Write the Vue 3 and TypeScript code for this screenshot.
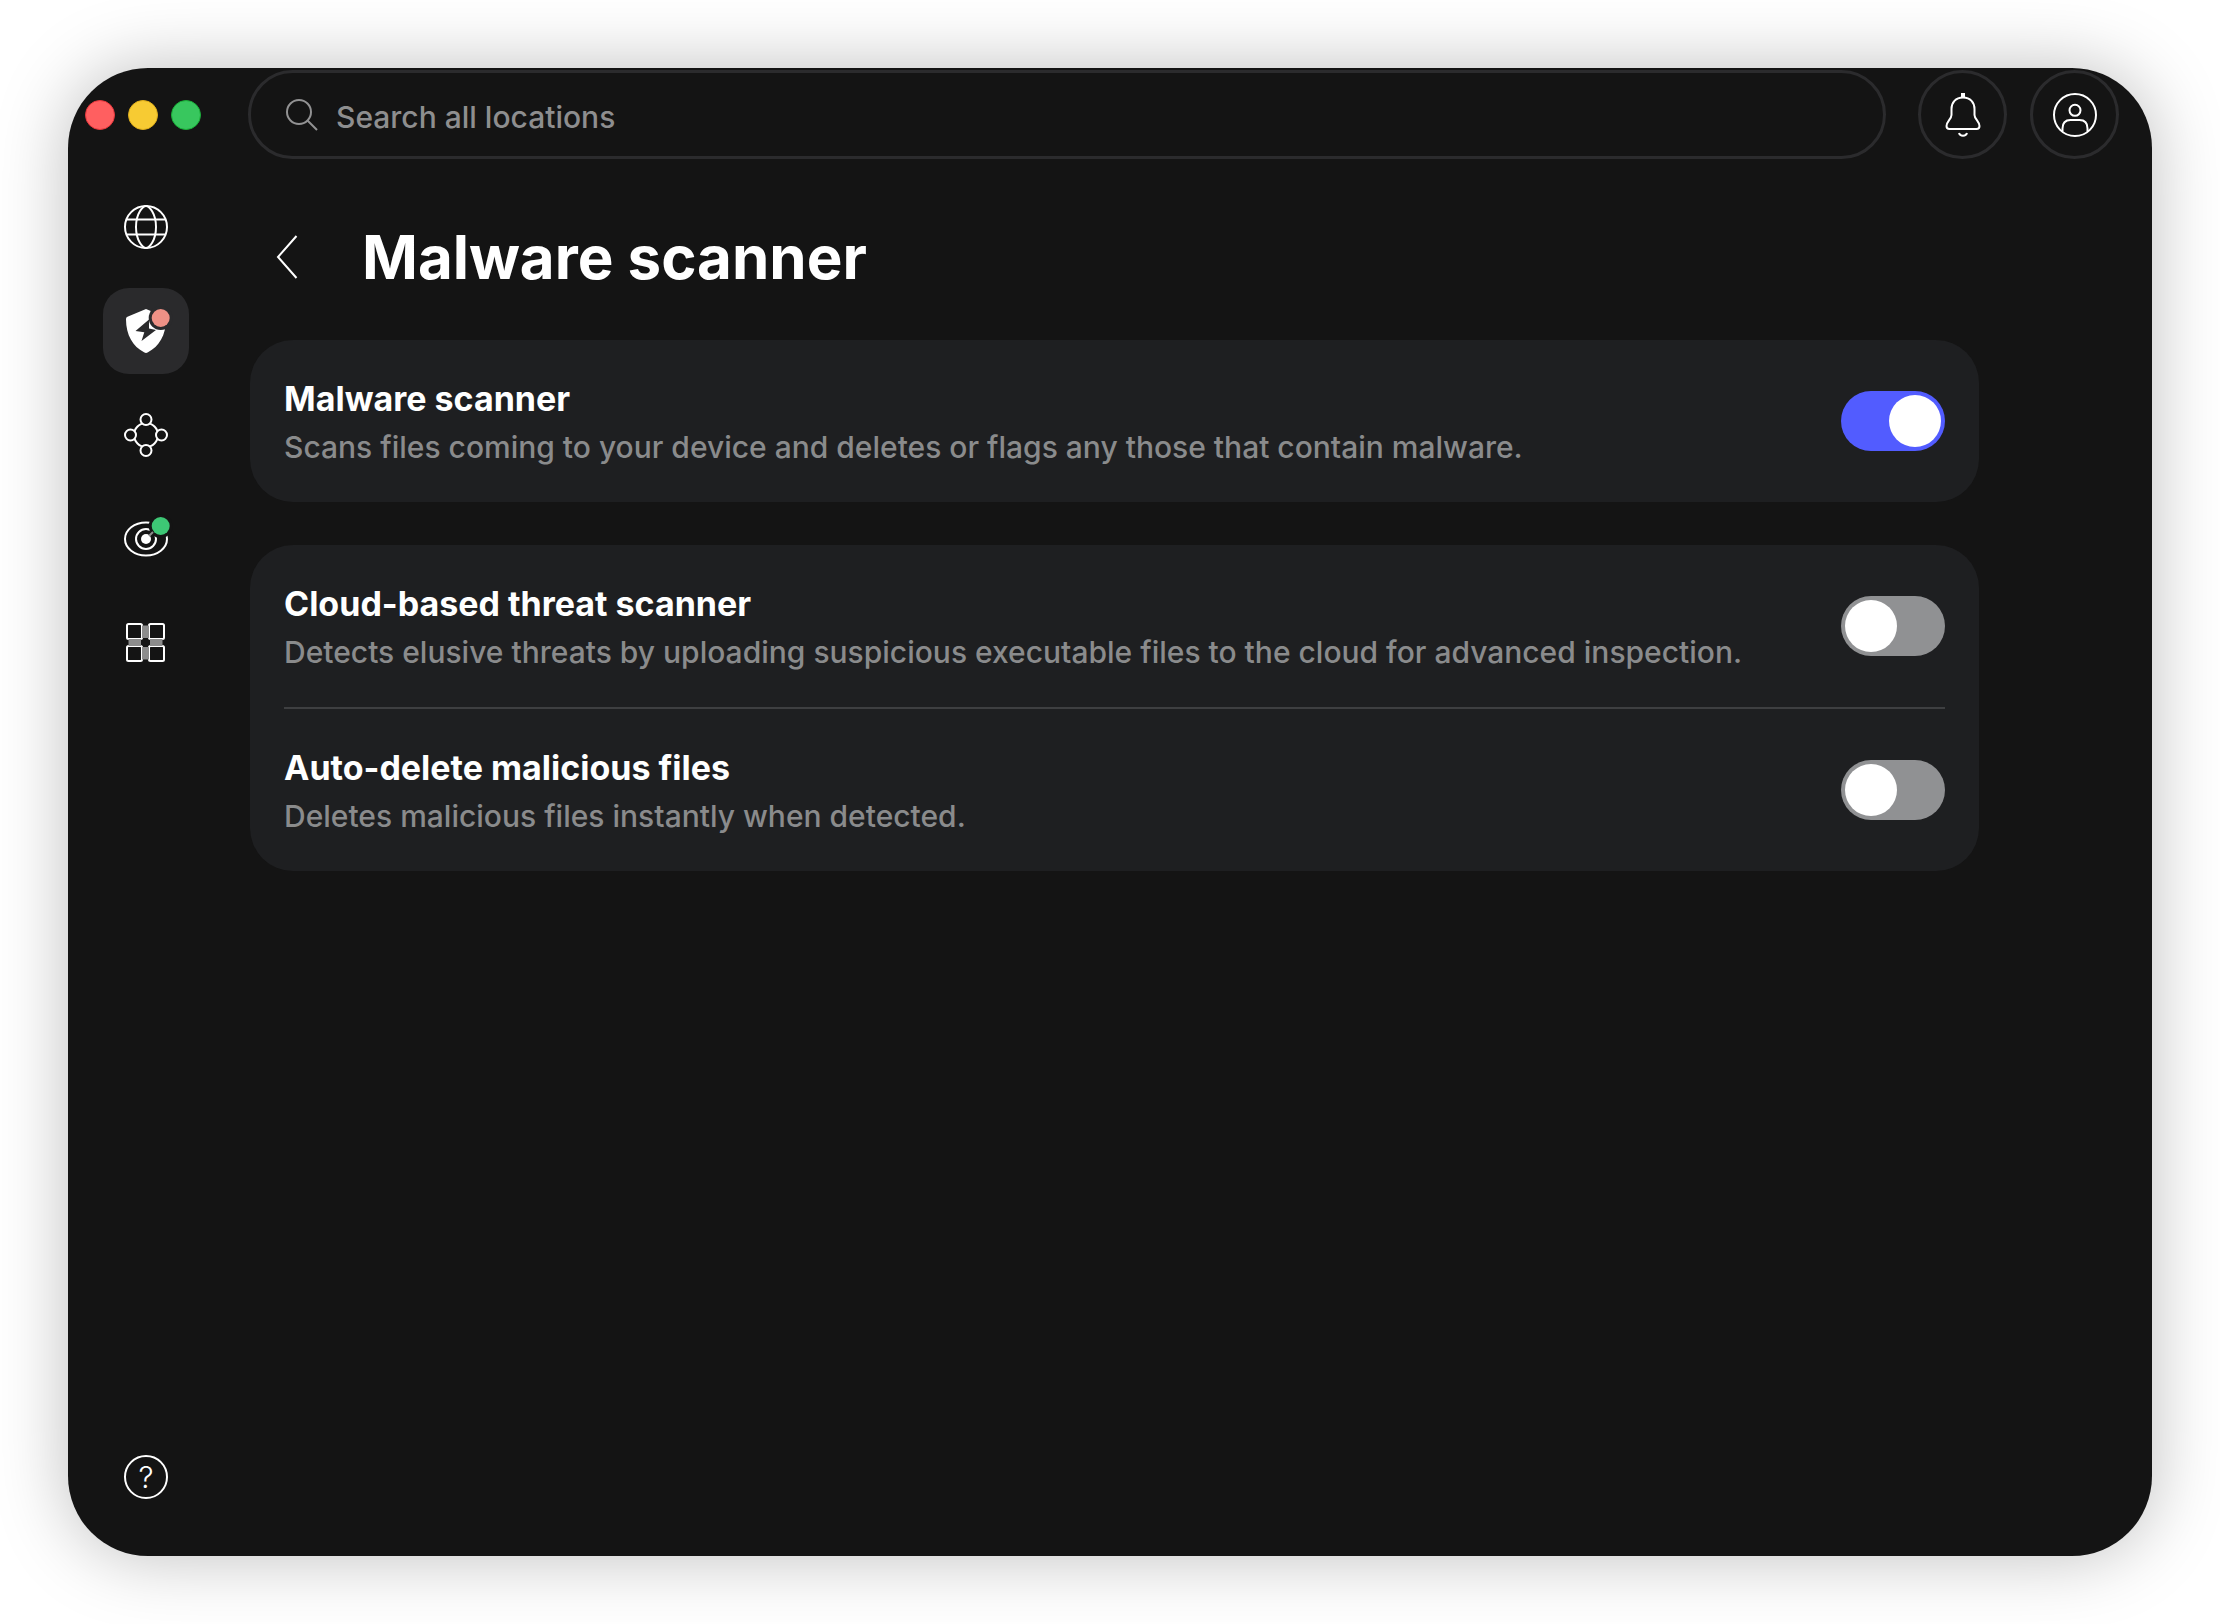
<script setup lang="ts">
import { ref } from 'vue'

interface Setting {
  id: string
  title: string
  description: string
  enabled: boolean
}

interface NavItem {
  id: string
  label: string
}

const query = ref('')
const activeNav = ref('threats')

const navItems: NavItem[] = [
  { id: 'vpn', label: 'VPN' },
  { id: 'threats', label: 'Threat protection' },
  { id: 'mesh', label: 'Device network' },
  { id: 'monitor', label: 'Dark web monitor' },
  { id: 'apps', label: 'More products' },
]

const groups = ref<Setting[][]>([
  [
    {
      id: 'malware-scanner',
      title: 'Malware scanner',
      description: 'Scans files coming to your device and deletes or flags any those that contain malware.',
      enabled: true,
    },
  ],
  [
    {
      id: 'cloud-scanner',
      title: 'Cloud-based threat scanner',
      description: 'Detects elusive threats by uploading suspicious executable files to the cloud for advanced inspection.',
      enabled: false,
    },
    {
      id: 'auto-delete',
      title: 'Auto-delete malicious files',
      description: 'Deletes malicious files instantly when detected.',
      enabled: false,
    },
  ],
])
</script>

<template>
  <div class="desktop">
    <div class="window">
      <header class="topbar">
        <div class="lights">
          <button class="light red" type="button" aria-label="Close"></button>
          <button class="light yellow" type="button" aria-label="Minimize"></button>
          <button class="light green" type="button" aria-label="Zoom"></button>
        </div>
        <label class="search">
          <svg class="search-icon" viewBox="0 0 32 32" aria-hidden="true">
            <circle cx="13" cy="13" r="12" />
            <path d="M21.5 21.5 31 31" />
          </svg>
          <input v-model="query" type="text" placeholder="Search all locations" aria-label="Search all locations" />
        </label>
        <div class="actions">
          <button class="round" type="button" aria-label="Notifications">
            <svg class="icon" viewBox="0 0 44 44" aria-hidden="true">
              <path d="M22 0v5" stroke-width="4" />
              <path d="M22 4.500C14.500 4.500 10.500 9.500 10.500 16v6c0 4-5 6.500-5 11 0 2 1 3 3 3h27c2 0 3-1 3-3 0-4.500-5-7-5-11v-6C33.500 9.500 29.500 4.500 22 4.500Z" />
              <path d="M18 40c1 3.500 7 3.500 8 0" />
            </svg>
          </button>
          <button class="round" type="button" aria-label="Account">
            <svg class="icon" viewBox="0 0 44 44" aria-hidden="true">
              <circle cx="22" cy="22" r="21" />
              <circle cx="22" cy="17.300" r="5.500" />
              <path d="M9.500 38.500v-3c0-5.500 3-8.500 8-8.500h9c5 0 8 3 8 8.500v3" />
            </svg>
          </button>
        </div>
      </header>

      <div class="body">
        <nav class="sidebar" aria-label="Products">
          <button
            v-for="item in navItems"
            :key="item.id"
            class="nav-item"
            :class="{ active: item.id === activeNav }"
            type="button"
            :aria-label="item.label"
            @click="activeNav = item.id"
          >
            <svg v-if="item.id === 'vpn'" class="icon" viewBox="0 0 44 44" aria-hidden="true">
              <circle cx="22" cy="22" r="21" />
              <path d="M2.500 14.600h39M2.500 29.400h39" />
              <path d="M22 1c-3 0-10 7-10 21s7 21 10 21 10-7 10-21S25 1 22 1Z" />
            </svg>
            <svg v-else-if="item.id === 'threats'" class="icon" viewBox="0 0 44 44" aria-hidden="true">
              <path class="solid" d="M22 0 4 7.500c-1.500.6-2 1.300-2 3C2 26 9 37.500 20 43.300c1.500.8 2.500.8 4 0C35 37.500 42 26 42 10.500c0-1.700-.5-2.400-2-3Z" />
              <path class="tile-cut" d="M25 10.500 11.500 22l8.800 1.200L17.500 32 32 21l-7-1.500Z" />
              <circle class="tile-cut" cx="36.700" cy="9" r="12" />
              <circle class="dot-red" cx="36.700" cy="9" r="9" />
            </svg>
            <svg v-else-if="item.id === 'mesh'" class="icon" viewBox="0 0 44 44" aria-hidden="true">
              <circle cx="22" cy="22" r="12" />
              <circle class="node" cx="22" cy="6.500" r="5.500" />
              <circle class="node" cx="6.500" cy="22" r="5.500" />
              <circle class="node" cx="37.500" cy="22" r="5.500" />
              <circle class="node" cx="22" cy="37.500" r="5.500" />
            </svg>
            <svg v-else-if="item.id === 'monitor'" class="icon" viewBox="0 0 44 44" aria-hidden="true">
              <ellipse cx="22" cy="22" rx="21" ry="16.500" />
              <circle cx="22" cy="22" r="10" />
              <circle class="window-cut" cx="36.700" cy="9" r="12" />
              <circle class="solid" cx="22" cy="22" r="5" />
              <path class="muted" d="m25 19 4-4" />
              <circle class="dot-green" cx="36.700" cy="9" r="9" />
            </svg>
            <svg v-else class="icon" viewBox="0 0 44 44" aria-hidden="true">
              <rect x="3" y="3" width="15" height="15" rx="1.500" />
              <rect x="25" y="3" width="15" height="15" rx="1.500" />
              <rect x="3" y="25" width="15" height="15" rx="1.500" />
              <rect x="25" y="25" width="15" height="15" rx="1.500" />
              <path class="muted-fill" d="M18 4.500h7v12.500h-7zM18 26h7v12.500h-7zM4.500 18h12.500v7h-12.500zM26 18h12.500v7h-12.500z" />
            </svg>
          </button>
          <button class="nav-item help" type="button" aria-label="Help">
            <span class="help-mark">?</span>
          </button>
        </nav>

        <main class="content">
          <div class="heading">
            <button class="back" type="button" aria-label="Back">
              <svg viewBox="0 0 22 44" aria-hidden="true">
                <path d="M20.500 1 2 22l18.500 21" />
              </svg>
            </button>
            <h1>Malware scanner</h1>
          </div>

          <section v-for="(group, index) in groups" :key="index" class="card">
            <div v-for="setting in group" :key="setting.id" class="row">
              <div class="text">
                <label class="title" :for="setting.id">{{ setting.title }}</label>
                <p :id="setting.id + '-note'" class="note">{{ setting.description }}</p>
              </div>
              <input
                :id="setting.id"
                v-model="setting.enabled"
                class="switch"
                type="checkbox"
                role="switch"
                :aria-describedby="setting.id + '-note'"
              />
            </div>
          </section>
        </main>
      </div>
    </div>
  </div>
</template>

<style>
body {
  background: #fff;
}
</style>

<style scoped>
.desktop,
.desktop * {
  box-sizing: border-box;
}

.desktop {
  display: flex;
  min-height: 100vh;
  padding: 68px;
  font-family: Inter, 'Liberation Sans', sans-serif;
  color: #fff;
}

button {
  padding: 0;
  border: 0;
  background: none;
  color: inherit;
  font: inherit;
}

.window {
  display: flex;
  flex: 1;
  flex-direction: column;
  min-width: 0;
  overflow: hidden;
  border-radius: 80px;
  background: #141414;
  box-shadow: 0 0 72px rgba(0, 0, 0, 0.26);
}

.topbar {
  display: flex;
  align-items: center;
  padding: 2px 33px 0 0;
}

.lights {
  display: flex;
  flex: none;
  gap: 13px;
  width: 180px;
  padding-left: 17px;
}

.light {
  width: 30px;
  height: 30px;
  border-radius: 50%;
}

.red {
  background: #ff5f60;
  border: 1px solid #e8383d;
}

.yellow {
  background: #f7cb33;
  border: 1px solid #dfae1c;
}

.green {
  background: #38c75e;
  border: 1px solid #1aae38;
}

.search {
  display: flex;
  flex: 1;
  align-items: center;
  gap: 18px;
  min-width: 0;
  height: 89px;
  margin-right: 32px;
  padding: 0 35px;
  border: 3px solid #2b2b2d;
  border-radius: 45px;
}

.search-icon {
  flex: none;
  width: 32px;
  height: 32px;
  fill: none;
  stroke: #929293;
  stroke-width: 2;
}

.search input {
  flex: 1;
  min-width: 0;
  height: 48px;
  padding: 4px 0 0;
  border: 0;
  outline: 0;
  background: none;
  color: #fff;
  font: 500 30px/44px Inter, 'Liberation Sans', sans-serif;
}

.search input::placeholder {
  color: #8e8e8f;
  opacity: 1;
}

.actions {
  display: flex;
  flex: none;
  gap: 23px;
}

.round {
  display: grid;
  place-items: center;
  width: 89px;
  height: 89px;
  border: 3px solid #2b2b2d;
  border-radius: 50%;
}

.icon {
  display: block;
  width: 44px;
  height: 44px;
  overflow: visible;
  fill: none;
  stroke: #fff;
  stroke-width: 2;
}

.solid {
  fill: #fff;
  stroke: none;
}

.tile-cut {
  fill: #2a2a2c;
  stroke: none;
}

.window-cut {
  fill: #141414;
  stroke: none;
}

.node {
  fill: #141414;
}

.muted {
  stroke: #8c8c8c;
}

.muted-fill {
  fill: #8c8c8c;
  stroke: none;
}

.dot-red {
  fill: #ef9186;
  stroke: none;
}

.dot-green {
  fill: #3dc775;
  stroke: none;
}

.body {
  display: flex;
  flex: 1;
}

.sidebar {
  display: flex;
  flex: none;
  flex-direction: column;
  align-items: center;
  gap: 18px;
  width: 156px;
  padding: 25px 0 36px;
}

.nav-item {
  display: grid;
  place-items: center;
  width: 86px;
  height: 86px;
  border-radius: 26px;
}

.nav-item.active {
  background: #2a2a2c;
}

.help {
  margin-top: auto;
}

.help-mark {
  width: 44px;
  height: 44px;
  border: 2px solid #fff;
  border-radius: 50%;
  font-size: 30px;
  font-weight: 300;
  line-height: 40px;
  text-align: center;
}

.content {
  flex: 1;
  min-width: 0;
  padding: 59px 173px 59px 26px;
}

.heading {
  display: flex;
  align-items: center;
  gap: 64px;
  margin-bottom: 44px;
  padding-left: 26px;
}

.back {
  flex: none;
  width: 22px;
  height: 44px;
}

.back svg {
  display: block;
  width: 22px;
  height: 44px;
  fill: none;
  stroke: #fff;
  stroke-width: 2;
}

h1 {
  margin: 0;
  font-size: 60px;
  font-weight: 700;
  line-height: 78px;
}

.card {
  margin-bottom: 43px;
  padding: 0 34px;
  border-radius: 43px;
  background: #1e1f21;
}

.row {
  display: flex;
  align-items: center;
  gap: 40px;
  min-height: 162px;
}

.row + .row {
  min-height: 164px;
  border-top: 2px solid #3e3f41;
}

.text {
  flex: 1;
  min-width: 0;
  padding-top: 4px;
}

.title {
  display: block;
  font-size: 34px;
  font-weight: 650;
  line-height: 48px;
}

.note {
  margin: 0;
  color: #8a8b8c;
  font-size: 30px;
  font-weight: 450;
  line-height: 48px;
}

.switch {
  flex: none;
  width: 104px;
  height: 60px;
  margin: 0;
  padding: 4px;
  appearance: none;
  border-radius: 30px;
  background: #909193;
}

.switch::before {
  display: block;
  width: 52px;
  height: 52px;
  border-radius: 50%;
  background: #fff;
  content: '';
}

.switch:checked {
  background: #525cff;
}

.switch:checked::before {
  margin-left: auto;
}
</style>
